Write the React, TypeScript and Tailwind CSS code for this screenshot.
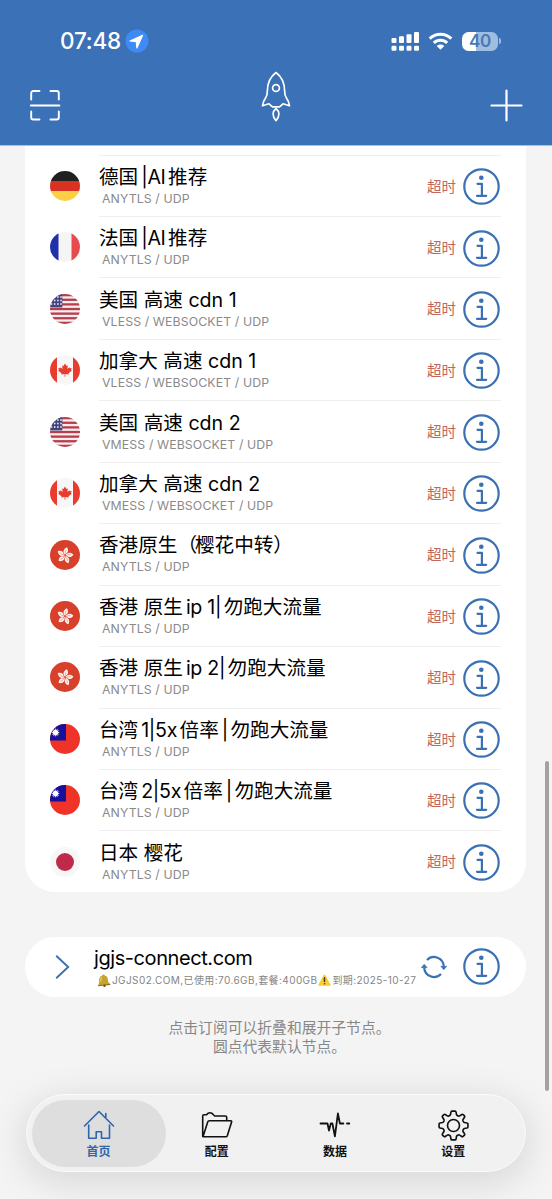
import { useState } from 'react'

type Flag = 'de' | 'fr' | 'us' | 'ca' | 'hk' | 'tw' | 'jp'

interface ServerNode {
  flag: Flag
  name: string
  protocol: string
}

const NODES: ServerNode[] = [
  { flag: 'de', name: '德国|AI推荐', protocol: 'ANYTLS / UDP' },
  { flag: 'fr', name: '法国|AI推荐', protocol: 'ANYTLS / UDP' },
  { flag: 'us', name: '美国 高速 cdn 1', protocol: 'VLESS / WEBSOCKET / UDP' },
  { flag: 'ca', name: '加拿大 高速 cdn 1', protocol: 'VLESS / WEBSOCKET / UDP' },
  { flag: 'us', name: '美国 高速 cdn 2', protocol: 'VMESS / WEBSOCKET / UDP' },
  { flag: 'ca', name: '加拿大 高速 cdn 2', protocol: 'VMESS / WEBSOCKET / UDP' },
  { flag: 'hk', name: '香港原生（樱花中转）', protocol: 'ANYTLS / UDP' },
  { flag: 'hk', name: '香港 原生ip 1|勿跑大流量', protocol: 'ANYTLS / UDP' },
  { flag: 'hk', name: '香港 原生ip 2|勿跑大流量', protocol: 'ANYTLS / UDP' },
  { flag: 'tw', name: '台湾1|5x倍率|勿跑大流量', protocol: 'ANYTLS / UDP' },
  { flag: 'tw', name: '台湾2|5x倍率|勿跑大流量', protocol: 'ANYTLS / UDP' },
  { flag: 'jp', name: '日本 樱花', protocol: 'ANYTLS / UDP' },
]

const TABS = [
  { id: 'home', label: '首页', icon: <HomeIcon /> },
  { id: 'config', label: '配置', icon: <FolderIcon /> },
  { id: 'data', label: '数据', icon: <PulseIcon /> },
  { id: 'settings', label: '设置', icon: <GearIcon /> },
]

export default function App() {
  const [tab, setTab] = useState('home')

  return (
    <div className="relative flex h-[1199px] w-[552px] flex-col overflow-hidden bg-[#f4f4f4] font-['Inter','Noto_Sans_CJK_SC',sans-serif] text-black">
      <header className="flex h-[146px] shrink-0 flex-col border-b border-[#a9bddc] bg-[#3b71b7] text-white">
        <StatusBar />
        <div className="grid grid-cols-3 items-start pt-[8px] pr-[29px] pl-[29px]">
          <button className="mt-[18px] justify-self-start" aria-label="Scan"><ScanIcon /></button>
          <span className="justify-self-center"><RocketIcon /></span>
          <button className="mt-[17px] justify-self-end" aria-label="Add"><PlusIcon /></button>
        </div>
      </header>

      <main className="flex flex-col pr-[26px] pl-[25px]">
        <section className="rounded-b-[30px] bg-white pt-[8.6px] pr-[25px] pl-[25px]">
          {NODES.map((node, i) => (
            <NodeRow key={i} node={node} />
          ))}
        </section>

        <section className="mt-[45px] flex h-[60px] items-center rounded-full bg-white pr-[26px] pl-[29px]">
          <svg className="h-[26px] w-[16px] shrink-0" viewBox="0 0 16 26" fill="none" stroke="#3b6fb0" strokeWidth="1.9">
            <path d="M2.2 1.8 14.2 13 2.2 24.2" />
          </svg>
          <div className="-mt-[1px] ml-[24px] flex-1 whitespace-nowrap">
            <p className="h-[27px] text-[20px] leading-[27px] tracking-[-0.42px]">jgjs-connect.com</p>
            <p className="mt-[1px] flex h-[15px] items-center pl-[3px] text-[10px] leading-[15px] tracking-[0.41px] text-[#858585]">
              <BellIcon />
              <span>JGJS02.COM,已使用:70.6GB,套餐:400GB</span>
              <WarningIcon />
              <span>到期:2025-10-27</span>
            </p>
          </div>
          <RefreshIcon />
          <InfoIcon />
        </section>

        <p className="mt-[22px] pl-[8px] text-center text-[14.8px] leading-[18.8px] text-[#878787]">
          点击订阅可以折叠和展开子节点。
          <br />
          圆点代表默认节点。
        </p>
      </main>

      {/* Scroll indicator */}
      <div className="absolute top-[761px] right-[3.5px] h-[330px] w-[4px] rounded-full bg-[#a2a2a2]" />

      {/* Tab bar */}
      <nav className="absolute top-[1094px] left-[26px] flex h-[78px] w-[500px] rounded-full border-[1.5px] border-[#fbfbfb] bg-[#f1f1f1] px-[12.5px] shadow-[0_8px_34px_6px_rgba(0,0,0,0.1)]">
        {TABS.map((t) => (
          <button
            key={t.id}
            onClick={() => setTab(t.id)}
            className={`mt-[4.5px] flex h-[67px] flex-1 flex-col items-center rounded-full ${
              tab === t.id ? '-mx-[8px] bg-[#dedede] px-[8px] text-[#3065ab]' : 'text-[#111]'
            }`}
          >
            <span className="mt-[9px] flex h-[35px] items-start">{t.icon}</span>
            <span className="text-[12px] leading-[16px] font-bold">{t.label}</span>
          </button>
        ))}
      </nav>
    </div>
  )
}

function StatusBar() {
  return (
    <div className="flex h-[63px] items-center pt-[19px] pr-[51px] pl-[60px]">
      <span className="text-[22.5px] leading-[26px] font-medium tracking-[-0.2px]">07:48</span>
      <svg className="ml-[4px] h-[24px] w-[24px]" viewBox="0 0 24 24">
        <circle cx="12" cy="12" r="11.5" fill="#3f8af5" />
        <path
          d="M17.6 6.3 5 12l6.300.7.600 6.200z"
          fill="#fff"
          stroke="#fff"
          strokeWidth="1.2"
          strokeLinejoin="round"
        />
      </svg>
      <svg className="ml-auto h-[19px] w-[29px]" viewBox="0 0 29 19" fill="currentColor">
        <rect x="0.5" y="6" width="5" height="5" rx="1" />
        <rect x="8" y="4.2" width="5" height="6.8" rx="1" />
        <rect x="15.5" y="2.2" width="5" height="8.8" rx="1" />
        <rect x="23" y="0" width="5" height="11" rx="1" />
        <rect x="0.5" y="13.8" width="5" height="5" rx="1.2" />
        <rect x="8" y="13.8" width="5" height="5" rx="1.2" />
        <rect x="15.5" y="13.8" width="5" height="5" rx="1.2" />
        <rect x="23" y="13.8" width="5" height="5" rx="1.2" />
      </svg>
      <svg className="ml-[8px] h-[18px] w-[25px]" viewBox="0 0 25 18" fill="none" stroke="currentColor" strokeWidth="3">
        <path d="M1.7 6.6a15.5 15.5 0 0 1 21.6 0" />
        <path d="M5.8 10.9a9.6 9.6 0 0 1 13.4 0" />
        <path d="M12.5 17.8 8.7 14a5.6 5.6 0 0 1 7.6 0z" fill="currentColor" stroke="none" />
      </svg>
      <span className="ml-[9px] flex h-[19px] w-[36px] items-center justify-center rounded-[6.5px] bg-linear-to-r from-white from-40% to-[#a0bce0] to-40% text-[17px] leading-[19px] font-semibold tracking-[-0.2px] text-[#4679b8]">
        40
      </span>
      <span className="ml-[1px] h-[6px] w-[2px] rounded-r-full bg-[#a0bce0]" />
    </div>
  )
}

function NodeRow({ node }: { node: ServerNode }) {
  return (
    <div className="flex h-[61.45px]">
      <div className="mt-[16.4px] h-[30px] w-[30px]"><FlagIcon flag={node.flag} /></div>
      <div className="ml-[19px] flex flex-1 border-t border-[#efefef]">
        <div className="flex-1 whitespace-nowrap">
          <NodeName name={node.name} />
          <p className="pl-[3px] text-[12.3px] leading-[16px] tracking-[0.11px] text-[#8a8a8a]">{node.protocol}</p>
        </div>
        <span className="mt-[21px] mr-[7px] text-[14.5px] leading-[20px] text-[#c0665b]">超时</span>
        <div className="mt-[12.5px] mr-[1px]"><InfoIcon /></div>
      </div>
    </div>
  )
}

// Adds a small gap wherever CJK and latin characters touch
function NodeName({ name }: { name: string }) {
  const runs = name.match(/[（]|[^\x00-\x7f（]+(?: [^\x00-\x7f]+)*|[\x00-\x7f]+/g) ?? []
  return (
    <p className="mt-[7.2px] flex h-[28px] text-[19.6px] leading-[28px] whitespace-pre">
      {runs.map((run, i) => (
        <span key={i} className={run === '（' ? 'tracking-[-2px]' : /^[|\w]/.test(run) ? 'mr-[2.5px] ml-[3px] tracking-[-0.3px]' : ''}>
          {run}
        </span>
      ))}
    </p>
  )
}

function FlagIcon({ flag }: { flag: Flag }) {
  return (
    <svg className="h-[30px] w-[30px] overflow-hidden rounded-full" viewBox="0 0 30 30">
      {flag === 'de' && (
        <>
          <rect width="30" height="10" fill="#202020" />
          <rect y="10" width="30" height="10" fill="#d93222" />
          <rect y="20" width="30" height="10" fill="#fbd045" />
        </>
      )}
      {flag === 'fr' && (
        <>
          <rect width="30" height="30" fill="#f5f5f5" />
          <rect width="8.5" height="30" fill="#2030a8" />
          <rect x="21.5" width="8.5" height="30" fill="#e84a4d" />
        </>
      )}
      {flag === 'us' && (
        <>
          <rect width="30" height="30" fill="#f6eeee" />
          {[0, 1, 2, 3, 4, 5, 6].map((n) => (
            <rect key={n} y={n * 4.62} width="30" height="2.31" fill="#b73f4d" />
          ))}
          <rect width="12.3" height="13.4" fill="#40457f" />
          {[3, 6.5, 10].map((y) => [1.5, 4.7, 7.9, 11].map((x) => (
            <circle key={`${x}-${y}`} cx={x} cy={y} r="0.9" fill="#dfe0ee" />
          )))}
        </>
      )}
      {flag === 'ca' && (
        <>
          <rect width="30" height="30" fill="#f7f7f7" />
          <rect width="7" height="30" fill="#e93b2e" />
          <rect x="23" width="7" height="30" fill="#e93b2e" />
          <path
            d="m15 8.500 1.500 2.500 1.400-.6-.6 3.600 2-1.800.5 1.100 1.900-.2-.7 2 .8.600-3.300 2.600.3 1.300-3.400-.5v2.700h-.8v-2.700l-3.400.5.3-1.300-3.300-2.600.8-.6-.7-2 1.900.2.500-1.100 2 1.800-.6-3.600 1.400.6z"
            fill="#e93b2e"
          />
        </>
      )}
      {flag === 'hk' && (
        <>
          <rect width="30" height="30" fill="#d8402b" />
          {[0, 72, 144, 216, 288].map((angle) => (
            <g key={angle} transform={`rotate(${angle + 14} 15 15.5)`}>
              <path d="M15 15c-3-1.500-3.500-5.300-.2-7.900 2.500 1.900 2.600 4.900.8 6.200-.6.500-.8 1-.6 1.700z" fill="#fff5f0" />
              <path d="M14.800 13.500c-.7-1.500-.6-2.900.2-4" fill="none" stroke="#d8402b" strokeWidth="0.4" />
            </g>
          ))}
        </>
      )}
      {flag === 'tw' && (
        <>
          <rect width="30" height="30" fill="#ef3328" />
          <rect width="16" height="16.5" fill="#16109b" />
          <circle cx="5.5" cy="8.5" r="2.5" fill="#fff" />
          {[0, 30, 60, 90, 120, 150].map((angle) => (
            <path key={angle} d="m5.5 4 1.200 4.500-1.200 4.500-1.200-4.500z" fill="#fff" transform={`rotate(${angle} 5.5 8.5)`} />
          ))}
        </>
      )}
      {flag === 'jp' && (
        <>
          <rect width="30" height="30" fill="#f7f7f7" />
          <circle cx="15" cy="15" r="9" fill="#c02a48" />
        </>
      )}
    </svg>
  )
}

function InfoIcon() {
  return (
    <svg className="h-[37px] w-[37px] shrink-0" viewBox="0 0 37 37" fill="none" stroke="#3a70b4" strokeWidth="2.2">
      <circle cx="18.5" cy="18.5" r="17.2" />
      <circle cx="18.3" cy="9.7" r="2.3" fill="#3a70b4" stroke="none" />
      <path d="M14.500 15.800h4.400v12M14 27.800h9.200" strokeLinecap="round" strokeLinejoin="round" />
    </svg>
  )
}

function ScanIcon() {
  return (
    <svg className="h-[32px] w-[32px]" viewBox="0 0 32 32" fill="none" stroke="currentColor" strokeWidth="1.9" strokeLinecap="round">
      <path d="M2.200 10.500V4a2 2 0 0 1 2-2h6.300M21.500 2h6.300a2 2 0 0 1 2 2v6.500M29.800 22.500v6a2 2 0 0 1-2 2h-6.300M10.500 30.500H4.200a2 2 0 0 1-2-2v-6M1.800 16.500h28.600" />
    </svg>
  )
}

function RocketIcon() {
  return (
    <svg className="h-[52px] w-[30px]" viewBox="0 0 30 52" fill="none" stroke="currentColor" strokeWidth="1.7" strokeLinejoin="round">
      <path d="M15 1.500C9.600 5.500 6.300 12.600 6.300 20.500c0 2.300-.2 4.300-1.600 6.300C2.900 29.300 1.800 31 1.500 34.800l6.500-2 3.500 3h7l3.500-3 6.500 2c-.3-3.800-1.400-5.500-3.200-8-1.400-2-1.600-4-1.600-6.300 0-7.900-3.300-15-8.700-19z" />
      <circle cx="15" cy="17" r="3.4" />
      <path d="M15 37.500c-1.900 1.600-2.900 3.300-2.900 5.600 0 2.500 1.200 4.800 2.900 6.600 1.700-1.800 2.900-4.100 2.900-6.600 0-2.300-1-4-2.900-5.600z" />
    </svg>
  )
}

function PlusIcon() {
  return (
    <svg className="h-[34px] w-[34px]" viewBox="0 0 34 34" fill="none" stroke="currentColor" strokeWidth="2.2" strokeLinecap="round">
      <path d="M17.500 2.500v30M2.500 17.500h30" />
    </svg>
  )
}

function RefreshIcon() {
  return (
    <svg className="mr-[16px] h-[26px] w-[26px] shrink-0" viewBox="0 0 26 26" fill="none" stroke="#3a70b4" strokeWidth="2.2">
      <path d="M6 6a9.800 9.800 0 0 1 16.800 6.500M20 20a9.800 9.800 0 0 1-16.800-6.500" />
      <path d="M19.800 12.300h6l-3 3.400zM.2 13.700h6l-3-3.400z" fill="#3a70b4" strokeWidth="0.6" strokeLinejoin="round" />
    </svg>
  )
}

function BellIcon() {
  return (
    <svg className="mr-[1px] h-[13px] w-[14px] shrink-0" viewBox="0 0 14 13">
      <path d="M6 .6c.8-.3 1.600 0 1.800.8 2.700.8 3.100 2.800 3.200 5 .1 1.500 1 2.400 2.200 3.600L1 11.400C1.800 10 2.200 9 2.100 7.200 2 4.700 2.600 2.300 5.300 1.600c0-.5.2-.8.7-1z" fill="#c9a22e" />
      <path d="M5 3c-1 .8-1.300 2.300-1.200 4.500" stroke="#f3dc7c" fill="none" />
      <path d="M1 11.200 13.200 9.800v1.100L1 12.300z" fill="#8b6b20" />
      <circle cx="7.5" cy="11.8" r="1.2" fill="#6f531c" />
    </svg>
  )
}

function WarningIcon() {
  return (
    <svg className="mr-[1px] ml-[1px] h-[12px] w-[13px] shrink-0" viewBox="0 0 13 12">
      <path d="M6.500 1.200 12 11H1z" fill="#f8ce35" stroke="#f8ce35" strokeWidth="1.5" strokeLinejoin="round" />
      <path d="M6.500 3.800v3.700" stroke="#443a20" strokeWidth="1.5" strokeLinecap="round" />
      <circle cx="6.5" cy="9.7" r="0.8" fill="#443a20" />
    </svg>
  )
}

function HomeIcon() {
  return (
    <svg className="h-[32px] w-[32px]" viewBox="0 0 32 32" fill="none" stroke="currentColor" strokeWidth="1.6" strokeLinecap="round" strokeLinejoin="round">
      <path d="M1.500 17 16 2.500 30.500 17M22.800 9V4.500M5.700 16v13.300h7.500v-6.500h5.300v6.500h8V16" />
    </svg>
  )
}

function FolderIcon() {
  return (
    <svg className="h-[32px] w-[32px]" viewBox="0 0 32 32" fill="none" stroke="currentColor" strokeWidth="1.6" strokeLinecap="round" strokeLinejoin="round">
      <path d="M1.700 27.500V7c0-.8.500-1.300 1.300-1.300h2.500C6.700 4 7.600 3.700 9 3.700s2.300.4 3.400 2l1.300 1.300h10.600c.8 0 1.400.5 1.400 1.300v3.500M2 27.800l4.700-14.700c.3-.9.800-1.300 1.600-1.300h21.500c.7 0 1 .6.800 1.300l-4.300 13.700c-.3.800-.7 1-1.500 1z" />
    </svg>
  )
}

function PulseIcon() {
  return (
    <svg className="h-[32px] w-[32px]" viewBox="0 0 32 32" fill="none" stroke="currentColor" strokeWidth="1.8" strokeLinecap="round" strokeLinejoin="round">
      <path d="M1.500 14.500h7l1.500 7 1.800-7h1.600l2.500 12.800 3-22.800 2 10h3.500M28 14.500h2.300" />
    </svg>
  )
}

// Outline traced once per tooth: crown, flank, then the valley to the next tooth
function GearIcon() {
  return (
    <svg className="mt-[1px] h-[31px] w-[31px]" viewBox="0 0 32 32" fill="none" stroke="currentColor" strokeWidth="1.7" strokeLinejoin="round">
      <path d="M13.400 2q.1-.9 1-.9h3.200q.9 0 1 .9l.5 2.700q.2.800 1 1.100l.8.400q.8.300 1.500-.2l2.100-1.400q.7-.5 1.400.1l1.400 1.400q.6.700.1 1.400L26 9.600q-.5.700-.2 1.500l.4.800q.3.800 1.100 1l2.700.5q.9.100.9 1v3.200q0 .9-.9 1l-2.700.5q-.8.200-1.100 1l-.4.800q-.3.800.2 1.500l1.400 2.100q.5.700-.1 1.400l-1.400 1.400q-.7.600-1.400.1L22.400 26q-.7-.5-1.500-.2l-.8.400q-.8.300-1 1.100l-.5 2.700q-.1.900-1 .9h-3.200q-.9 0-1-.9l-.5-2.700q-.2-.8-1-1.100l-.8-.4q-.8-.3-1.500.2l-2.100 1.400q-.7.500-1.400-.1l-1.400-1.400q-.6-.7-.1-1.400L6 22.400q.5-.7.200-1.500l-.4-.8q-.3-.8-1.100-1L2 18.600q-.9-.1-.9-1v-3.200q0-.9.900-1l2.700-.5q.8-.2 1.100-1l.4-.8q.3-.8-.2-1.500L4.600 7.500q-.5-.7.1-1.400l1.400-1.400q.7-.6 1.400-.1L9.600 6q.7.500 1.500.2l.8-.4q.8-.3 1-1.100z" />
      <circle cx="16" cy="16" r="6.2" />
    </svg>
  )
}
